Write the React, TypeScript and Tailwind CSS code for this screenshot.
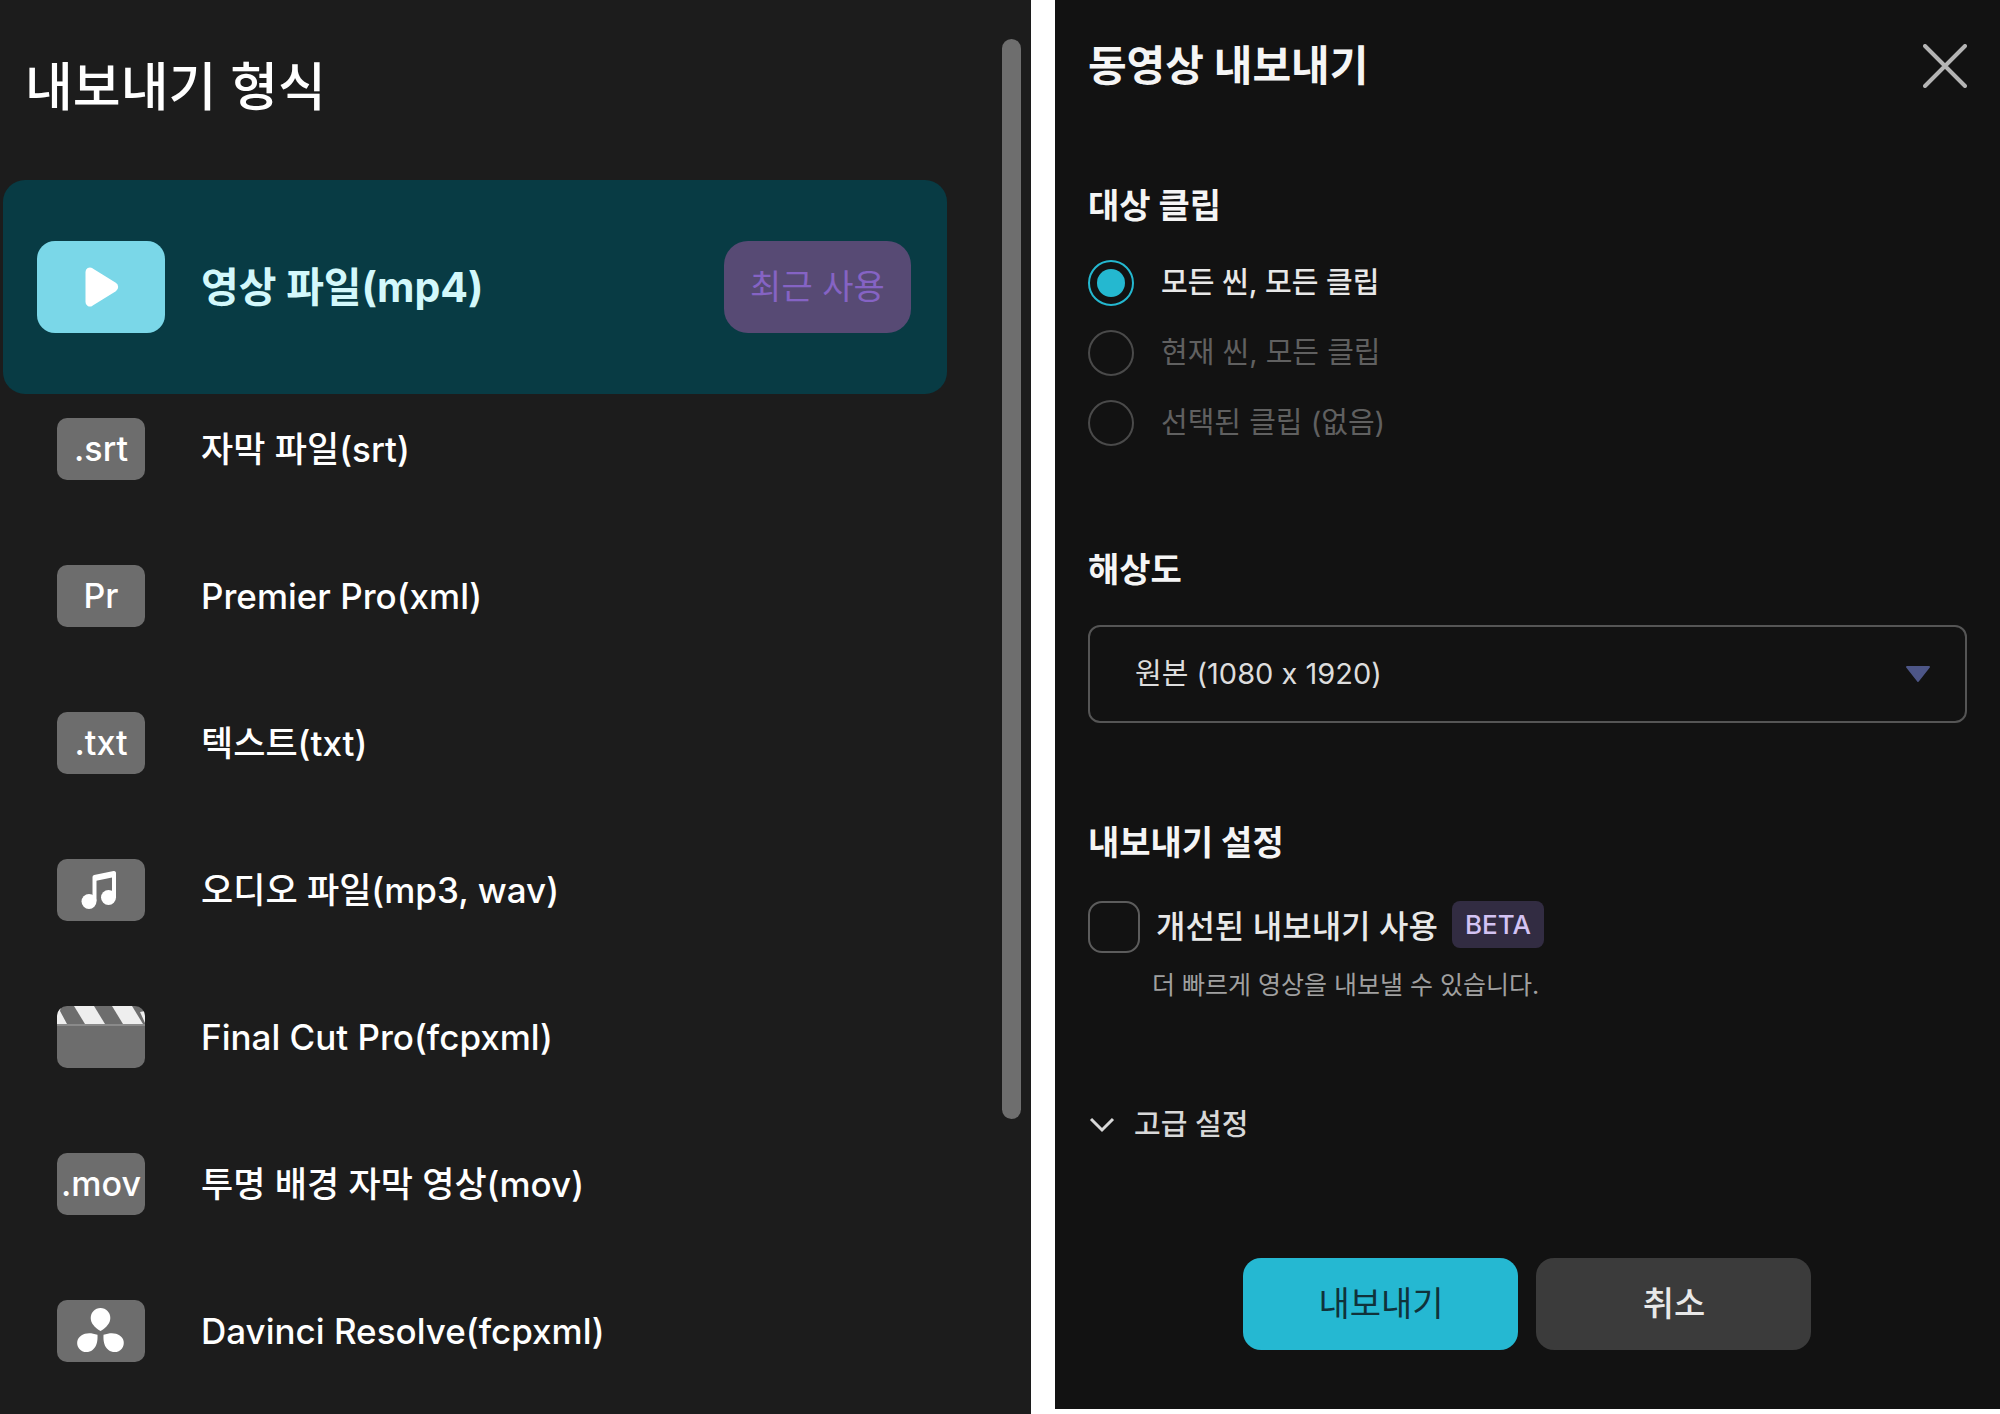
import { useState } from "react"
import type { ReactNode } from "react"

const PlayIcon = () => (
  <svg viewBox="0 0 128 92" className="h-full w-full" aria-hidden="true">
    <path
      d="M52 31v30a1 1 0 0 0 1.500 .9l23.500-14.700a1.400 1.400 0 0 0 0-2.400L53.500 30.100A1 1 0 0 0 52 31z"
      fill="#fff"
      stroke="#fff"
      strokeWidth="7"
      strokeLinejoin="round"
    />
  </svg>
)

const MusicIcon = () => (
  <svg viewBox="0 0 88 62" className="h-full w-full" aria-hidden="true">
    <ellipse cx="32" cy="42.500" rx="7.500" ry="7.500" fill="#fff" />
    <ellipse cx="51.500" cy="38.500" rx="7.500" ry="7.500" fill="#fff" />
    <path d="M37.500 42V18L57 14V38" fill="none" stroke="#fff" strokeWidth="4" strokeLinejoin="round" />
    <path d="M37.500 19.500L57 15.500" stroke="#fff" strokeWidth="5" />
  </svg>
)

const ClapperIcon = () => (
  <svg viewBox="0 0 88 62" className="h-full w-full" aria-hidden="true">
    <g fill="#eeeeee">
      <path d="M0 0h4l-1 5 7 13H0z" />
      <path d="M17 0h20l11 18H28z" />
      <path d="M55 0h20l11 18H66z" />
      <path d="M83 6l5-1v12z" />
    </g>
    <path d="M0 19h88" stroke="#8a8a8a" strokeWidth="2" />
  </svg>
)

const ResolveIcon = () => (
  <svg viewBox="0 0 88 62" className="h-full w-full" aria-hidden="true">
    <g fill="#fff">
      <path d="M43.500 8c5.600 0 9.800 4.500 9.800 10 0 5-3.800 9.500-9.800 13-6-3.500-9.800-8-9.800-13 0-5.500 4.200-10 9.800-10z" />
      <path d="M40.500 34.800c.3 6-.5 11.700-5 15.200-4.200 3.300-10.500 2.600-13.500-1.600-3.200-4.500-2-10.300 2.300-13 4.200-2.700 9.700-2.800 16.200-.6z" />
      <path d="M46.500 34.800c-.3 6 .5 11.700 5 15.200 4.200 3.300 10.500 2.600 13.500-1.600 3.200-4.500 2-10.300-2.300-13-4.200-2.700-9.700-2.800-16.200-.6z" />
    </g>
  </svg>
)

const formats: { label: string; icon: ReactNode }[] = [
  { label: "자막 파일(srt)", icon: ".srt" },
  { label: "Premier Pro(xml)", icon: "Pr" },
  { label: "텍스트(txt)", icon: ".txt" },
  { label: "오디오 파일(mp3, wav)", icon: <MusicIcon /> },
  { label: "Final Cut Pro(fcpxml)", icon: <ClapperIcon /> },
  { label: "투명 배경 자막 영상(mov)", icon: ".mov" },
  { label: "Davinci Resolve(fcpxml)", icon: <ResolveIcon /> },
]

const FormatPanel = () => (
  <section className="flex items-start overflow-hidden bg-[#1c1c1c] pr-[10px] pl-[3px]">
    <div className="min-w-0 flex-1">
      <h1 className="mt-14 pl-[22px] text-[52px] leading-[64px] font-medium text-white">내보내기 형식</h1>

      <button
        type="button"
        className="mt-[60px] flex h-[214px] w-full items-center rounded-[22px] bg-[#083b44] pr-9 pl-[34px] text-left"
      >
        <span className="h-[92px] w-32 shrink-0 rounded-[18px] bg-[#7ad7e8]">
          <PlayIcon />
        </span>
        <span className="ml-9 flex-1 text-[41px] leading-[52px] font-bold text-[#d3f8fb]">영상 파일(mp4)</span>
        <span className="flex h-[92px] w-[187px] shrink-0 items-center justify-center rounded-[24px] bg-[#574a74] text-[34px] leading-[52px] text-[#8563c4]">
          최근 사용
        </span>
      </button>

      <ul className="mt-6 flex flex-col gap-[85px]">
        {formats.map((format) => (
          <li key={format.label}>
            <button type="button" className="flex h-[62px] w-full items-center pl-[54px] text-left">
              <span className="flex h-[62px] w-[88px] shrink-0 items-center justify-center overflow-hidden rounded-[10px] bg-[#6d6d6d] text-[34px] leading-[52px] font-medium text-white">
                {format.icon}
              </span>
              <span className="ml-14 text-[35px] leading-[52px] font-medium text-white">{format.label}</span>
            </button>
          </li>
        ))}
      </ul>
    </div>

    <div className="mt-[39px] ml-[55px] h-[1080px] w-[19px] shrink-0 rounded-full bg-[#6e6e6e]" />
  </section>
)

const clips = [
  { value: "all", label: "모든 씬, 모든 클립", disabled: false },
  { value: "scene", label: "현재 씬, 모든 클립", disabled: true },
  { value: "selected", label: "선택된 클립 (없음)", disabled: true },
]

const ExportDialog = () => {
  const [clip, setClip] = useState("all")
  const [improved, setImproved] = useState(false)

  return (
    <section className="mb-[5px] bg-[#121212] px-[33px] pt-9">
      <header className="flex items-center justify-between">
        <h2 className="text-[42px] leading-[60px] font-bold text-[#f5f5f5]">동영상 내보내기</h2>
        <button type="button" aria-label="닫기">
          <svg viewBox="0 0 44 44" className="h-11 w-11" aria-hidden="true">
            <path d="M2 2l40 40M42 2L2 42" stroke="#b4b4b4" strokeWidth="4" strokeLinecap="round" />
          </svg>
        </button>
      </header>

      <fieldset className="mt-[88px]">
        <legend className="text-[34px] leading-[44px] font-bold text-[#f5f5f5]">대상 클립</legend>
        <div className="mt-8 flex flex-col gap-6">
          {clips.map((item) => (
            <label
              key={item.value}
              className="flex items-center gap-[27px] text-[29px] leading-[46px] font-medium text-[#e8e8e8] has-disabled:font-normal has-disabled:text-[#606060]"
            >
              <input
                type="radio"
                name="clip"
                value={item.value}
                checked={clip === item.value}
                disabled={item.disabled}
                onChange={() => setClip(item.value)}
                className="h-[46px] w-[46px] appearance-none rounded-full border-2 border-[#4a4a4a] bg-clip-content p-[7px] checked:border-[#24b8d0] checked:bg-[#24b8d0]"
              />
              {item.label}
            </label>
          ))}
        </div>
      </fieldset>

      <div className="mt-[102px]">
        <label htmlFor="resolution" className="block text-[34px] leading-[44px] font-bold text-[#f5f5f5]">
          해상도
        </label>
        <div className="relative mt-[33px]">
          <select
            id="resolution"
            className="block h-[98px] w-full appearance-none rounded-xl border-2 border-[#555555] bg-transparent px-[45px] text-[29px] text-[#dddddd]"
          >
            <option>원본 (1080 x 1920)</option>
          </select>
          <svg
            viewBox="0 0 26 18"
            className="pointer-events-none absolute top-1/2 right-9 h-[18px] w-[26px] -translate-y-1/2"
            aria-hidden="true"
          >
            <path d="M2 2h22L13 16z" fill="#4d5687" stroke="#4d5687" strokeWidth="2" strokeLinejoin="round" />
          </svg>
        </div>
      </div>

      <div className="mt-[98px]">
        <h3 className="text-[34px] leading-[44px] font-bold text-[#f5f5f5]">내보내기 설정</h3>
        <div className="mt-9 flex items-center">
          <input
            id="improved"
            type="checkbox"
            checked={improved}
            onChange={(e) => setImproved(e.target.checked)}
            className="h-[52px] w-[52px] appearance-none rounded-[14px] border-2 border-[#5c5c5c] checked:bg-[#24b8d0]"
          />
          <label htmlFor="improved" className="ml-4 text-[32px] leading-[52px] font-medium text-[#e8e8e8]">
            개선된 내보내기 사용
          </label>
          <span className="ml-[14px] flex h-[47px] items-center self-start rounded-lg bg-[#322c42] px-[13px] text-[26px] leading-[47px] font-medium text-[#d3c3f3]">
            BETA
          </span>
        </div>
        <p className="mt-4 pl-16 text-[25px] leading-[32px] text-[#a0a0a0]">더 빠르게 영상을 내보낼 수 있습니다.</p>
      </div>

      <button
        type="button"
        className="mt-[102px] flex items-center gap-[18px] text-[29px] leading-[44px] font-medium text-[#d8d8d8]"
      >
        <svg viewBox="0 0 28 18" className="h-[18px] w-7" aria-hidden="true">
          <path d="M3 3l11 11L25 3" fill="none" stroke="#d8d8d8" strokeWidth="3" />
        </svg>
        고급 설정
      </button>

      <footer className="mt-[111px] flex justify-center gap-[18px] pb-[58px] text-[34px] leading-[44px]">
        <button type="button" className="h-[92px] w-[275px] rounded-[18px] bg-[#25b8d2] text-[#10323a]">
          내보내기
        </button>
        <button type="button" className="h-[92px] w-[275px] rounded-[18px] bg-[#3b3b3b] font-medium text-[#e8e8e8]">
          취소
        </button>
      </footer>
    </section>
  )
}

export default function App() {
  return (
    <main className="grid min-h-screen grid-cols-[12fr_11fr] gap-6 bg-white font-['Inter','Noto_Sans_CJK_KR',sans-serif]">
      <FormatPanel />
      <ExportDialog />
    </main>
  )
}
